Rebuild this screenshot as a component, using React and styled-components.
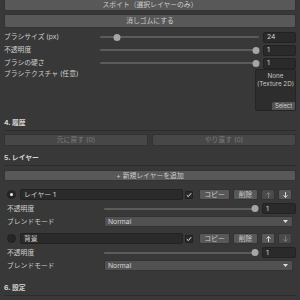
import React from 'react';
import styled, { createGlobalStyle } from 'styled-components';

const Global = createGlobalStyle`
  html, body { margin: 0; padding: 0; background: #383838; }
  body {
    font-family: "Inter", "Noto Sans CJK JP", sans-serif;
    font-size: 6.8px;
    color: #cdcdcd;
    overflow: hidden;
  }
  #root { width: 300px; height: 300px; overflow: hidden; }
`;

const Panel = styled.div`
  display: flex;
  flex-direction: column;
  width: 300px;
  height: 300px;
  padding: 0 4px;
  box-sizing: border-box;
  overflow: hidden;
`;

const Button = styled.div`
  display: flex;
  align-items: center;
  justify-content: center;
  flex: ${p => (p.$grow ? 1 : 'none')};
  height: ${p => p.$h || 12}px;
  margin-top: ${p => p.$mt || 0}px;
  box-sizing: border-box;
  background: ${p => (p.$disabled ? '#474747' : '#585858')};
  color: ${p => (p.$disabled ? '#7c7c7c' : '#cdcdcd')};
  border: 1px solid #333;
  border-radius: 2px;
  line-height: 10px;
  white-space: nowrap;
`;

const ButtonRow = styled.div`
  display: flex;
  gap: 4px;
  margin-top: ${p => p.$mt || 0}px;
`;

const PropRow = styled.div`
  display: flex;
  align-items: ${p => (p.$top ? 'flex-start' : 'center')};
  height: ${p => p.$h || 12}px;
  margin-top: ${p => p.$mt || 0}px;
`;

const Label = styled.div`
  width: ${p => p.$w || 96}px;
  flex: none;
  line-height: 10px;
  white-space: nowrap;
`;

const SliderBox = styled.div`
  position: relative;
  flex: 1;
  height: 10px;
  margin-right: 4px;
`;

const Track = styled.div`
  position: absolute;
  left: 0;
  right: 0;
  top: 4px;
  height: 2px;
  background: #5c5c5c;
  border-radius: 1px;
`;

const Knob = styled.div`
  position: absolute;
  top: 1.5px;
  width: 7px;
  height: 7px;
  border-radius: 50%;
  background: #a6a6a6;
  transform: translateX(-50%);
`;

const Field = styled.div`
  display: flex;
  align-items: center;
  flex: ${p => (p.$grow ? 1 : 'none')};
  width: ${p => (p.$w ? `${p.$w}px` : 'auto')};
  height: 11px;
  box-sizing: border-box;
  padding-left: 3px;
  background: #2a2a2a;
  border: 1px solid #222;
  border-radius: 2px;
  color: #d4d4d4;
  line-height: 10px;
  white-space: nowrap;
`;

const Slider = ({ value, min, max }) => {
  const f = (value - min) / (max - min);
  return (
    <SliderBox>
      <Track />
      <Knob style={{ left: `calc(3.5px + (100% - 7px) * ${f})` }} />
    </SliderBox>
  );
};

const TextureBox = styled.div`
  position: relative;
  margin-left: auto;
  width: 41px;
  height: 42px;
  box-sizing: border-box;
  background: #2d2d2d;
  border: 1px solid #242424;
  border-radius: 2px;
  display: flex;
  flex-direction: column;
  align-items: center;
  padding-top: 2px;
  line-height: 8px;
  font-size: 6.3px;
  color: #c8c8c8;
  white-space: nowrap;
`;

const SelectTag = styled.div`
  position: absolute;
  right: 0;
  bottom: 0;
  width: 23px;
  height: 8px;
  background: #545454;
  border-radius: 2px 0 1px 0;
  font-size: 5.8px;
  line-height: 8px;
  text-align: center;
  color: #d0d0d0;
`;

const SectionHeader = styled.div`
  margin-top: ${p => p.$mt || 0}px;
  font-weight: 700;
  line-height: 10px;
  padding-bottom: 2px;
  border-bottom: 1px solid #2c2c2c;
  color: #d4d4d4;
`;

const LayerBlock = styled.div`
  display: flex;
  flex-direction: column;
  padding-left: 3px;
  margin-top: ${p => p.$mt || 0}px;
`;

const LayerHead = styled.div`
  display: flex;
  align-items: center;
  height: 11px;
  padding-right: 4px;
`;

const Radio = styled.span`
  flex: none;
  width: 9px;
  height: 9px;
  box-sizing: border-box;
  margin-right: 4px;
  border-radius: 50%;
  background: #262626;
  border: 1px solid #202020;
  display: flex;
  align-items: center;
  justify-content: center;
  &::after {
    content: '';
    width: 3px;
    height: 3px;
    border-radius: 50%;
    background: ${p => (p.$on ? '#f0f0f0' : 'transparent')};
  }
`;

const Check = styled.span`
  flex: none;
  width: 8px;
  height: 8px;
  box-sizing: border-box;
  margin-left: 2px;
  margin-right: 6px;
  background: #2a2a2a;
  border: 1px solid #202020;
  border-radius: 1px;
  display: flex;
  align-items: center;
  justify-content: center;
`;

const SmallButton = styled.div`
  flex: none;
  width: ${p => p.$w}px;
  height: 11px;
  margin-left: ${p => p.$ml || 0}px;
  box-sizing: border-box;
  background: ${p => (p.$disabled ? '#4a4a4a' : '#585858')};
  color: ${p => (p.$disabled ? '#7a7a7a' : '#cdcdcd')};
  border: 1px solid #333;
  border-radius: 2px;
  display: flex;
  align-items: center;
  justify-content: center;
  line-height: 10px;
  white-space: nowrap;
`;

const Dropdown = styled.div`
  flex: 1;
  display: flex;
  align-items: center;
  justify-content: space-between;
  height: 11px;
  margin-right: 3px;
  box-sizing: border-box;
  padding: 0 4px 0 3px;
  background: #515151;
  border: 1px solid #333;
  border-radius: 2px;
  color: #d4d4d4;
  line-height: 10px;
`;

const Arrow = ({ up, color }) => (
  <svg width="5" height="6" viewBox="0 0 5 6">
    {up ? (
      <path d="M2.5 0.5 L4.5 2.7 M2.5 0.5 L0.5 2.7 M2.5 0.5 V6" stroke={color} strokeWidth="1" fill="none" />
    ) : (
      <path d="M2.5 5.5 L4.5 3.3 M2.5 5.5 L0.5 3.3 M2.5 5.5 V0" stroke={color} strokeWidth="1" fill="none" />
    )}
  </svg>
);

const CheckMark = () => (
  <svg width="6" height="6" viewBox="0 0 6 6">
    <path d="M0.8 3.2 L2.3 4.6 L5.2 1.2" stroke="#e6e6e6" strokeWidth="1" fill="none" />
  </svg>
);

const Caret = () => (
  <svg width="5" height="3" viewBox="0 0 5 3">
    <path d="M0 0 H5 L2.5 3 Z" fill="#dcdcdc" />
  </svg>
);

const Layer = ({ mt, name, selected, upDisabled, downDisabled }) => (
  <LayerBlock $mt={mt}>
    <LayerHead>
      <Radio $on={selected} />
      <Field $grow>{name}</Field>
      <Check><CheckMark /></Check>
      <SmallButton $w={31}>コピー</SmallButton>
      <SmallButton $w={25} $ml={3}>削除</SmallButton>
      <SmallButton $w={14} $ml={3} $disabled={upDisabled}>
        <Arrow up color={upDisabled ? '#7a7a7a' : '#d6d6d6'} />
      </SmallButton>
      <SmallButton $w={14} $ml={3} $disabled={downDisabled}>
        <Arrow color={downDisabled ? '#7a7a7a' : '#d6d6d6'} />
      </SmallButton>
    </LayerHead>
    <PropRow $h={11} $mt={3}>
      <Label $w={97}>不透明度</Label>
      <Slider value={1} min={0} max={1} />
      <Field $w={34}>1</Field>
    </PropRow>
    <PropRow $h={11} $mt={2}>
      <Label $w={97}>ブレンドモード</Label>
      <Dropdown>
        <span>Normal</span>
        <Caret />
      </Dropdown>
    </PropRow>
  </LayerBlock>
);

export default function App() {
  return (
    <>
      <Global />
      <Panel>
        <Button $h={13} $mt={-2}>スポイト（選択レイヤーのみ）</Button>
        <Button $h={14} $mt={3}>消しゴムにする</Button>

        <PropRow $mt={3}>
          <Label>ブラシサイズ (px)</Label>
          <Slider value={24} min={1} max={256} />
          <Field $w={33}>24</Field>
        </PropRow>
        <PropRow $mt={1}>
          <Label>不透明度</Label>
          <Slider value={1} min={0} max={1} />
          <Field $w={33}>1</Field>
        </PropRow>
        <PropRow $mt={1}>
          <Label>ブラシの硬さ</Label>
          <Slider value={1} min={0} max={1} />
          <Field $w={33}>1</Field>
        </PropRow>
        <PropRow $h={42} $top>
          <Label>ブラシテクスチャ (任意)</Label>
          <TextureBox>
            <span>None</span>
            <span>(Texture 2D)</span>
            <SelectTag>Select</SelectTag>
          </TextureBox>
        </PropRow>

        <SectionHeader $mt={7}>4. 履歴</SectionHeader>
        <ButtonRow $mt={3}>
          <Button $grow $disabled>元に戻す (0)</Button>
          <Button $grow $disabled>やり直す (0)</Button>
        </ButtonRow>

        <SectionHeader $mt={7}>5. レイヤー</SectionHeader>
        <Button $h={11} $mt={4}>+ 新規レイヤーを追加</Button>

        <Layer mt={8} name="レイヤー 1" selected upDisabled />
        <Layer mt={6} name="背景" downDisabled />

        <SectionHeader $mt={12}>6. 設定</SectionHeader>
      </Panel>
    </>
  );
}
